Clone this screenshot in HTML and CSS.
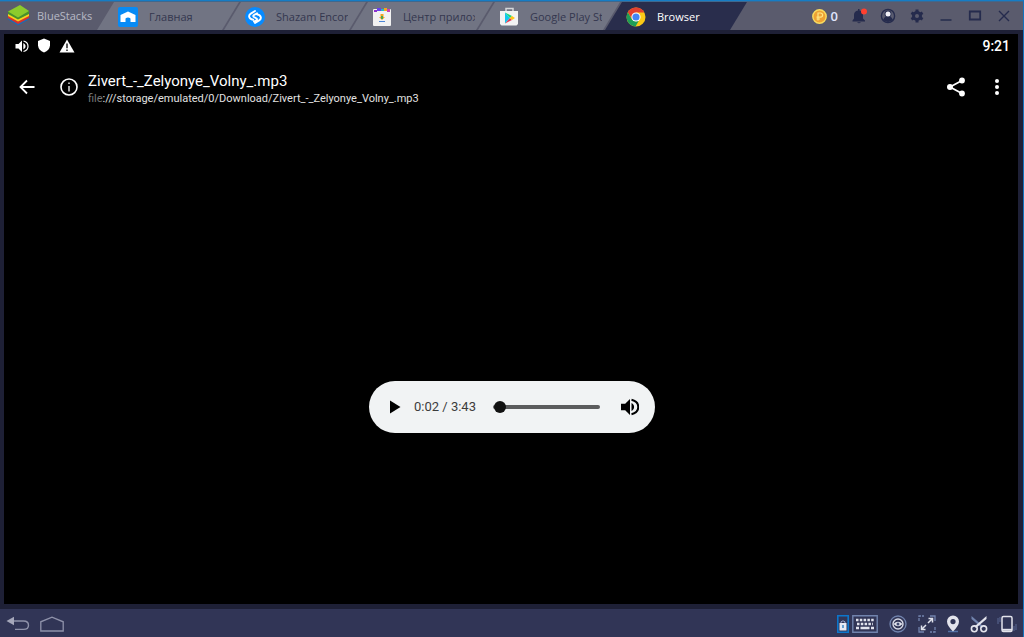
FILE: index.html
```html
<!DOCTYPE html>
<html lang="ru">
<head>
<meta charset="utf-8">
<meta name="viewport" content="width=device-width, initial-scale=1">
<title>BlueStacks</title>
<link rel="stylesheet" href="styles.css">
</head>
<body>
<div class="window">
  <header class="titlebar">
    <div class="brand">
      <svg width="24" height="22" viewBox="0 0 24 22" aria-hidden="true">
        <path d="M1 13v2.500l10 6 11-6V12l-11 6z" fill="#1c6bb5"/>
        <path d="M1 11v3l10 6 11-6v-3l-11 5z" fill="#d9342b"/>
        <path d="M1 9v3l10 5.500L22 12V9l-11 5z" fill="#f3d51c"/>
        <path d="M1 7.500v2.500l10 5.500 11-5.500V7z" fill="#46922c"/>
        <path d="M1 7.500 13 1l9 6-11 6.500z" fill="#8ccb2c"/>
      </svg>
      <span>BlueStacks</span>
    </div>
    <nav class="tabs">
      <button class="tab" type="button">
        <svg width="20" height="20" viewBox="0 0 20 20" aria-hidden="true"><rect width="20" height="20" rx="2" fill="#078bf5"/><path d="M10 4.500 2.500 8v7h5v-3.500q2.500-2 5 0V15h5V8z" fill="#fff"/></svg>
        <span class="label">Главная</span>
      </button>
      <button class="tab" type="button">
        <svg width="20" height="20" viewBox="0 0 20 20" aria-hidden="true"><circle cx="10" cy="10" r="10" fill="#078bff"/><path d="M8.200 12.800C3.500 12 3.200 8.200 5.800 6.600L10 4M11.800 7.200c4.700.8 5 4.600 2.400 6.200L10 16M12 6.300 9 8q-1.500 1 0 2l2.500 1.500q1.200 1-.2 1.800L9 14.500" fill="none" stroke="#fff" stroke-width="1.900" stroke-linecap="round"/></svg>
        <span class="label">Shazam Encore</span>
      </button>
      <button class="tab" type="button">
        <svg width="20" height="20" viewBox="0 0 20 20" aria-hidden="true"><rect x="1" y="2" width="18" height="17" rx="1" fill="#f2f2f2"/><path d="M2 3h3v2H2z" fill="#8d32cf"/><path d="M5 1h4v3H5z" fill="#6840ec"/><path d="M9 2h4v2H9z" fill="#27b9c6"/><path d="M12 1h3v3h-3z" fill="#f4a51c"/><path d="M15 2h3v3h-3z" fill="#cb40b4"/><path d="M8.500 7h3v3H13l-3 3-3-3h1.500z" fill="#f2a520"/><path d="M9 9h2v3H9z" fill="#4ca650"/><path d="M7 14h6v1H7z" fill="#4c86d8"/></svg>
        <span class="label">Центр приложений</span>
      </button>
      <button class="tab" type="button">
        <svg width="20" height="20" viewBox="0 0 20 20" aria-hidden="true"><path d="M7 4V1.500h7V4" fill="none" stroke="#d5d7da" stroke-width="1.500"/><path d="M1 4h18v13l-1.500 1.500h-15L1 17z" fill="#f3f3f3"/><path d="M6 5.500v11l5-5.500z" fill="#12c8ee"/><path d="M6 5.500 13 9l-2 2z" fill="#18d77a"/><path d="M6 16.500 13 13l-2-2z" fill="#e53855"/><path d="m13 9 3 2-3 2-2-2z" fill="#ffc515"/></svg>
        <span class="label">Google Play Store</span>
      </button>
      <button class="tab active" type="button">
        <svg width="20" height="20" viewBox="0 0 20 20" aria-hidden="true"><circle cx="10" cy="10" r="9.500" fill="#fbc916"/><path d="M1.800 5.200A9.500 9.500 0 0 1 18.300 5.500H10L6 12z" fill="#e2402f"/><path d="M1.800 5.200A9.500 9.500 0 0 0 9.500 19.500l4-7-3.500 2-4-2z" fill="#1e9d58"/><circle cx="10" cy="10" r="4.600" fill="#fff"/><circle cx="10" cy="10" r="3.600" fill="#4285f4"/></svg>
        <span class="label">Browser</span>
      </button>
    </nav>
    <div class="tools">
      <button class="coins" type="button" aria-label="Баллы: 0">
        <svg width="15" height="15" viewBox="0 0 15 15" aria-hidden="true"><circle cx="7.500" cy="7.500" r="6.700" fill="#eea233" stroke="#f9dc60" stroke-width="1.400"/><path d="M6 11.500V4h2.500a2 2 0 0 1 0 4.200H4.500M4.500 10H8" fill="none" stroke="#ffe683" stroke-width="1.200"/></svg>
        <span>0</span>
      </button>
      <button class="tool" type="button" aria-label="Уведомления"><svg width="18" height="18" viewBox="0 0 18 18"><path d="M2.500 13.500 4 11.500V8q0-4 4-4.500V2h1.500v1.500Q13 4 13 8v3.500l2 2v1h-12.500zM7 15.200h4q-2 2-4 0z" fill="#252b4d"/><circle cx="14" cy="4.500" r="3" fill="#ff402f"/></svg></button>
      <button class="tool" type="button" aria-label="Профиль"><svg width="16" height="16" viewBox="0 0 16 16"><circle cx="8" cy="8" r="6.600" fill="#5a5c70" stroke="#252b4d" stroke-width="1.400"/><path d="M3 12q1-3 3-3.500h4q2 .5 3 3.500-5 4-10 0z" fill="#252b4d"/><circle cx="8" cy="6" r="3.400" fill="#252b4d"/><circle cx="8" cy="6" r="2.500" fill="#f0f0f7"/></svg></button>
      <button class="tool" type="button" aria-label="Настройки"><svg width="14" height="14" viewBox="0 0 14 14"><path d="M7 .5v13M1.400 3.700l11.200 6.600M1.400 10.300l11.200-6.600" stroke="#252b4d" stroke-width="3"/><circle cx="7" cy="7" r="5" fill="#252b4d"/><circle cx="7" cy="7" r="2" fill="#5a5b6d"/></svg></button>
      <button class="tool" type="button" aria-label="Свернуть"><svg width="14" height="14" viewBox="0 0 14 14"><path d="M1.500 11h11" stroke="#252b4d" stroke-width="1.500"/></svg></button>
      <button class="tool" type="button" aria-label="Развернуть"><svg width="14" height="14" viewBox="0 0 14 14"><path d="M1.800 2.500h10.400v8H1.800z" fill="none" stroke="#252b4d" stroke-width="1.800"/></svg></button>
      <button class="tool" type="button" aria-label="Закрыть"><svg width="14" height="14" viewBox="0 0 14 14"><path d="m2 2 10 10M12 2 2 12" stroke="#252b4d" stroke-width="1.400"/></svg></button>
    </div>
  </header>

  <main class="screen">
    <div class="status">
      <div class="status-icons">
        <svg width="14" height="14" viewBox="0 0 14 14"><path d="M.5 5v4.500h3L7 13V1.500L3.500 5z" fill="#fff"/><path d="M8.300 4v6.500c3-1.500 3-5 0-6.500z" fill="#fff"/><path d="M8.500 2c6 1.500 6 9 0 10.500" fill="none" stroke="#fff" stroke-width="1.200"/></svg>
        <svg width="14" height="15" viewBox="0 0 14 15"><path d="M7 .5 13 3v4.500q-.5 5-6 7-5.500-2-6-7V3z" fill="#fff"/></svg>
        <svg width="16" height="14" viewBox="0 0 16 14"><path d="M8 .5 15.500 13.500H.5z" fill="#fff"/><path d="M8 4.500v4.800M8 10.500v1.600" stroke="#222" stroke-width="1.500"/></svg>
      </div>
      <time>9:21</time>
    </div>
    <div class="appbar">
      <button class="app-button" type="button" aria-label="Назад"><svg width="24" height="24" viewBox="0 0 24 24"><path d="M19.500 12H5.500m6.500-6.500L5.500 12l6.500 6.500" fill="none" stroke="#fff" stroke-width="1.800"/></svg></button>
      <button class="app-button info" type="button" aria-label="О странице"><svg width="20" height="20" viewBox="0 0 20 20"><circle cx="10" cy="10" r="8" fill="none" stroke="#fff" stroke-width="1.600"/><path d="M10 5.500V7m0 2v5.500" stroke="#ddd" stroke-width="1.500"/></svg></button>
      <div class="page">
        <h1>Zivert_-_Zelyonye_Volny_.mp3</h1>
        <p><span class="scheme">file</span>:///storage/emulated/0/Download/Zivert_-_Zelyonye_Volny_.mp3</p>
      </div>
      <button class="app-button share" type="button" aria-label="Поделиться"><svg width="20" height="20" viewBox="0 0 20 20"><path d="M16 3.500 4 10l12 6.500" fill="none" stroke="#fff" stroke-width="1.700"/><circle cx="16" cy="3.500" r="2.900" fill="#fff"/><circle cx="4" cy="10" r="3" fill="#fff"/><circle cx="16" cy="16.500" r="2.900" fill="#fff"/></svg></button>
      <button class="app-button" type="button" aria-label="Меню"><svg width="6" height="18" viewBox="0 0 6 18"><circle cx="3" cy="3" r="2" fill="#fff"/><circle cx="3" cy="9" r="2" fill="#fff"/><circle cx="3" cy="15" r="2" fill="#fff"/></svg></button>
    </div>
    <div class="stage">
      <div class="player">
        <button class="play" type="button" aria-label="Воспроизвести"><svg width="12" height="14" viewBox="0 0 12 14"><path d="M1 .5 11.500 7 1 13.500z" fill="#000"/></svg></button>
        <span class="timing">0:02 / 3:43</span>
        <input class="seek" type="range" min="0" max="223" value="2" aria-label="Позиция">
        <button class="play" type="button" aria-label="Звук"><svg width="18" height="18" viewBox="0 0 18 18"><path d="M0 5.800v6.400h4.200L9 17V1L4.200 5.800zM10.500 5v8c3.500-1.500 3.500-6.500 0-8z" fill="#000"/><path d="M10.500 1.800c9 2 9 12.400 0 14.400" fill="none" stroke="#000" stroke-width="2"/></svg></button>
      </div>
    </div>
  </main>

  <footer class="dock">
    <div class="dock-left">
      <button type="button" aria-label="Назад"><svg width="24" height="16" viewBox="0 0 24 16"><path d="M8 5h9.500q5 0 5 4.200t-5 4.200H9" fill="none" stroke="#8f92aa" stroke-width="1.400"/><path d="M.5 5 8 .8v8.400z" fill="#a5a7ba"/></svg></button>
      <button type="button" aria-label="Домой"><svg width="24" height="16" viewBox="0 0 24 16"><path d="M.8 15V5.800L12 1.200l11.200 4.600V15z" fill="none" stroke="#8f92aa" stroke-width="1.300"/></svg></button>
    </div>
    <div class="dock-right">
      <button type="button" aria-label="Блокировка клавиш"><svg width="12" height="18" viewBox="0 0 12 18"><path d="M.8.8h10.400v16.400H.8z" fill="none" stroke="#0c76cb" stroke-width="1.600"/><path d="M4 8V6.800q2-2 4 0V8" fill="none" stroke="#98a7cb"/><path d="M2.500 8h7v7.500h-7z" fill="#e8eaf3"/><path d="M6 10v3" stroke="#2379bd" stroke-width="1.300"/></svg></button>
      <button class="keyboard" type="button" aria-label="Клавиатура"><svg width="26" height="18" viewBox="0 0 26 18"><path d="M.8.8h24.400v16.400H.8z" fill="none" stroke="#7183ad" stroke-width="1.400"/><path d="M4 5h18M5 9h16" stroke="#e1e3ed" stroke-width="2.600" stroke-dasharray="2.500 1.300"/><path d="M4 13h3m1.500 0h9m1.500 0h3" stroke="#e1e3ed" stroke-width="2.400"/></svg></button>
      <button class="eye" type="button" aria-label="Режим просмотра"><svg width="18" height="18" viewBox="0 0 18 18"><circle cx="9" cy="9" r="8" fill="none" stroke="#7183ad" stroke-width="1.300"/><circle cx="9" cy="9" r="5" fill="none" stroke="#d7d9e5" stroke-width="1.400"/><path d="M4.500 9Q9 4.500 13.500 9 9 13.500 4.500 9z" fill="#e4e5ee"/><circle cx="9" cy="9" r="1.500" fill="#414b72"/></svg></button>
      <button class="expand" type="button" aria-label="Во весь экран"><svg width="18" height="18" viewBox="0 0 18 18"><path d="M1 6V1h5M17 12v5h-5" fill="none" stroke="#7183ad" stroke-width="1.300" stroke-dasharray="3 1"/><path d="M12 1h5v5M1 12v5h5" fill="none" stroke="#7183ad" stroke-width="1.300"/><path d="M10 8l4.500-4.500M10.500 3.500h4v4M8 10l-4.500 4.500M3.500 10.500v4h4" fill="none" stroke="#e0e2ec" stroke-width="1.500"/></svg></button>
      <button class="pin" type="button" aria-label="Местоположение"><svg width="14" height="18" viewBox="0 0 14 18"><path d="M2 16.500h10" stroke="#5270a5" stroke-width="1.500"/><path fill="#e3e4ec" fill-rule="evenodd" d="M7 .5a6 6 0 0 1 6 6q0 4-6 10-6-6-6-10a6 6 0 0 1 6-6zm0 3.500a2.600 2.600 0 1 0 0 5.200A2.600 2.600 0 0 0 7 4z"/></svg></button>
      <button class="cut" type="button" aria-label="Снимок экрана"><svg width="18" height="18" viewBox="0 0 18 18"><path d="M1.500 1v3L12 13l1.500-1.500z" fill="#7183ad"/><path d="M16.500 1v3L6 13l-1.500-1.500z" fill="#e3e4ec"/><circle cx="4.300" cy="13.800" r="2.900" fill="none" stroke="#e3e4ec" stroke-width="1.600"/><circle cx="13.700" cy="13.800" r="2.900" fill="none" stroke="#e3e4ec" stroke-width="1.600"/></svg></button>
      <button class="shake" type="button" aria-label="Встряхнуть"><svg width="20" height="18" viewBox="0 0 20 18"><rect x="5" y="1.500" width="10" height="15" rx="1.500" fill="none" stroke="#e3e4ec" stroke-width="1.500"/><path d="M5 14.800h10" stroke="#e3e4ec" stroke-width="2"/><path d="M1 3v6M3 2v5M17 11v5M19 9v6" stroke="#5a6993"/></svg></button>
    </div>
  </footer>
</div>
</body>
</html>
```
FILE: styles.css
```css
* { box-sizing: border-box; }

body {
  margin: 0;
  background: #1e2036;
  font-family: "Open Sans", "Noto Sans", sans-serif;
}

button {
  margin: 0;
  padding: 0;
  border: 0;
  background: none;
  color: inherit;
  font: inherit;
}

svg { display: block; flex: none; }

.window {
  display: flex;
  flex-direction: column;
  min-height: 100vh;
  border-top: 1px solid #167cc4;
  border-right: 1px solid #1475bd;
}

.titlebar {
  display: flex;
  height: 29px;
  background: #5a5b6d;
  border-top: 1px solid #3f688e;
}

.brand {
  display: flex;
  align-items: center;
  gap: 6px;
  width: 97px;
  padding: 0 0 2px 7px;
  color: #b7b9c5;
  font-size: 11px;
}

.tabs { display: flex; }

.tab {
  display: flex;
  align-items: center;
  gap: 11px;
  width: 142px;
  margin-right: -15px;
  padding: 1px 18px 0 21px;
  background: #717483;
  color: #34374f;
  font-size: 11px;
  text-align: left;
  clip-path: polygon(17px 0, 100% 0, calc(100% - 17px) 100%, 0 100%);
}

.tab.active { background: #292d4c; color: #fff; }

.label {
  flex: 1;
  min-width: 0;
  overflow: hidden;
  white-space: nowrap;
}

.tools {
  display: flex;
  align-items: center;
  margin-left: auto;
  padding-right: 5px;
}

.tool {
  display: grid;
  place-items: center;
  width: 29px;
  height: 28px;
}

.coins {
  display: flex;
  align-items: center;
  gap: 4px;
  padding-right: 6px;
  color: #e0e5fb;
  font-size: 13px;
  font-weight: 600;
}

.screen {
  flex: 1;
  display: flex;
  flex-direction: column;
  margin: 4px 5px 5px 4px;
  background: #000;
  color: #fff;
  font-family: Roboto, sans-serif;
}

.status {
  display: flex;
  align-items: center;
  justify-content: space-between;
  height: 23px;
  padding: 0 8px 0 11px;
  font-size: 14px;
  font-weight: 500;
}

.status-icons { display: flex; align-items: center; gap: 8px; }

.appbar {
  display: flex;
  align-items: center;
  height: 60px;
  padding: 0 9px 0 11px;
}

.app-button {
  display: grid;
  place-items: center;
  width: 24px;
  height: 40px;
}

.info { margin-left: 18px; }
.share { margin-right: 17px; }

.page { flex: 1; min-width: 0; padding: 3px 0 0 7px; }

.page h1 {
  margin: 0;
  font-size: 15px;
  font-weight: 400;
  line-height: 20px;
}

.page p {
  margin: 0;
  color: #e2e2e2;
  font-size: 11px;
  line-height: 16px;
}

.page .scheme { color: #777; }

.stage {
  flex: 1;
  display: grid;
  place-items: center;
  padding: 263px 0 171px 2px;
}

.player {
  display: flex;
  align-items: center;
  width: 286px;
  height: 52px;
  padding: 0 16px 0 20px;
  border-radius: 26px;
  background: #f1f3f4;
}

.play { display: grid; place-items: center; }

.timing {
  margin-left: 13px;
  color: #3c3c3c;
  font-size: 13px;
}

.seek {
  flex: 1;
  min-width: 0;
  height: 16px;
  margin: 0 21px 0 17px;
  appearance: none;
  background: none;
}

.seek::-webkit-slider-runnable-track {
  height: 4px;
  border-radius: 2px;
  background: #5b5c5d;
}

.seek::-webkit-slider-thumb {
  width: 12px;
  height: 12px;
  margin-top: -4px;
  appearance: none;
  border-radius: 50%;
  background: #111;
}

.dock {
  display: flex;
  align-items: center;
  justify-content: space-between;
  height: 28px;
  padding: 2px 6px 0;
  background: #313556;
}

.dock-left, .dock-right { display: flex; align-items: center; }
.dock-left { gap: 10px; }
.keyboard { margin-left: 3px; }
.eye { margin-left: 11px; }
.expand { margin-left: 11px; }
.pin { margin-left: 10px; }
.cut { margin-left: 10px; }
.shake { margin-left: 9px; }
```
